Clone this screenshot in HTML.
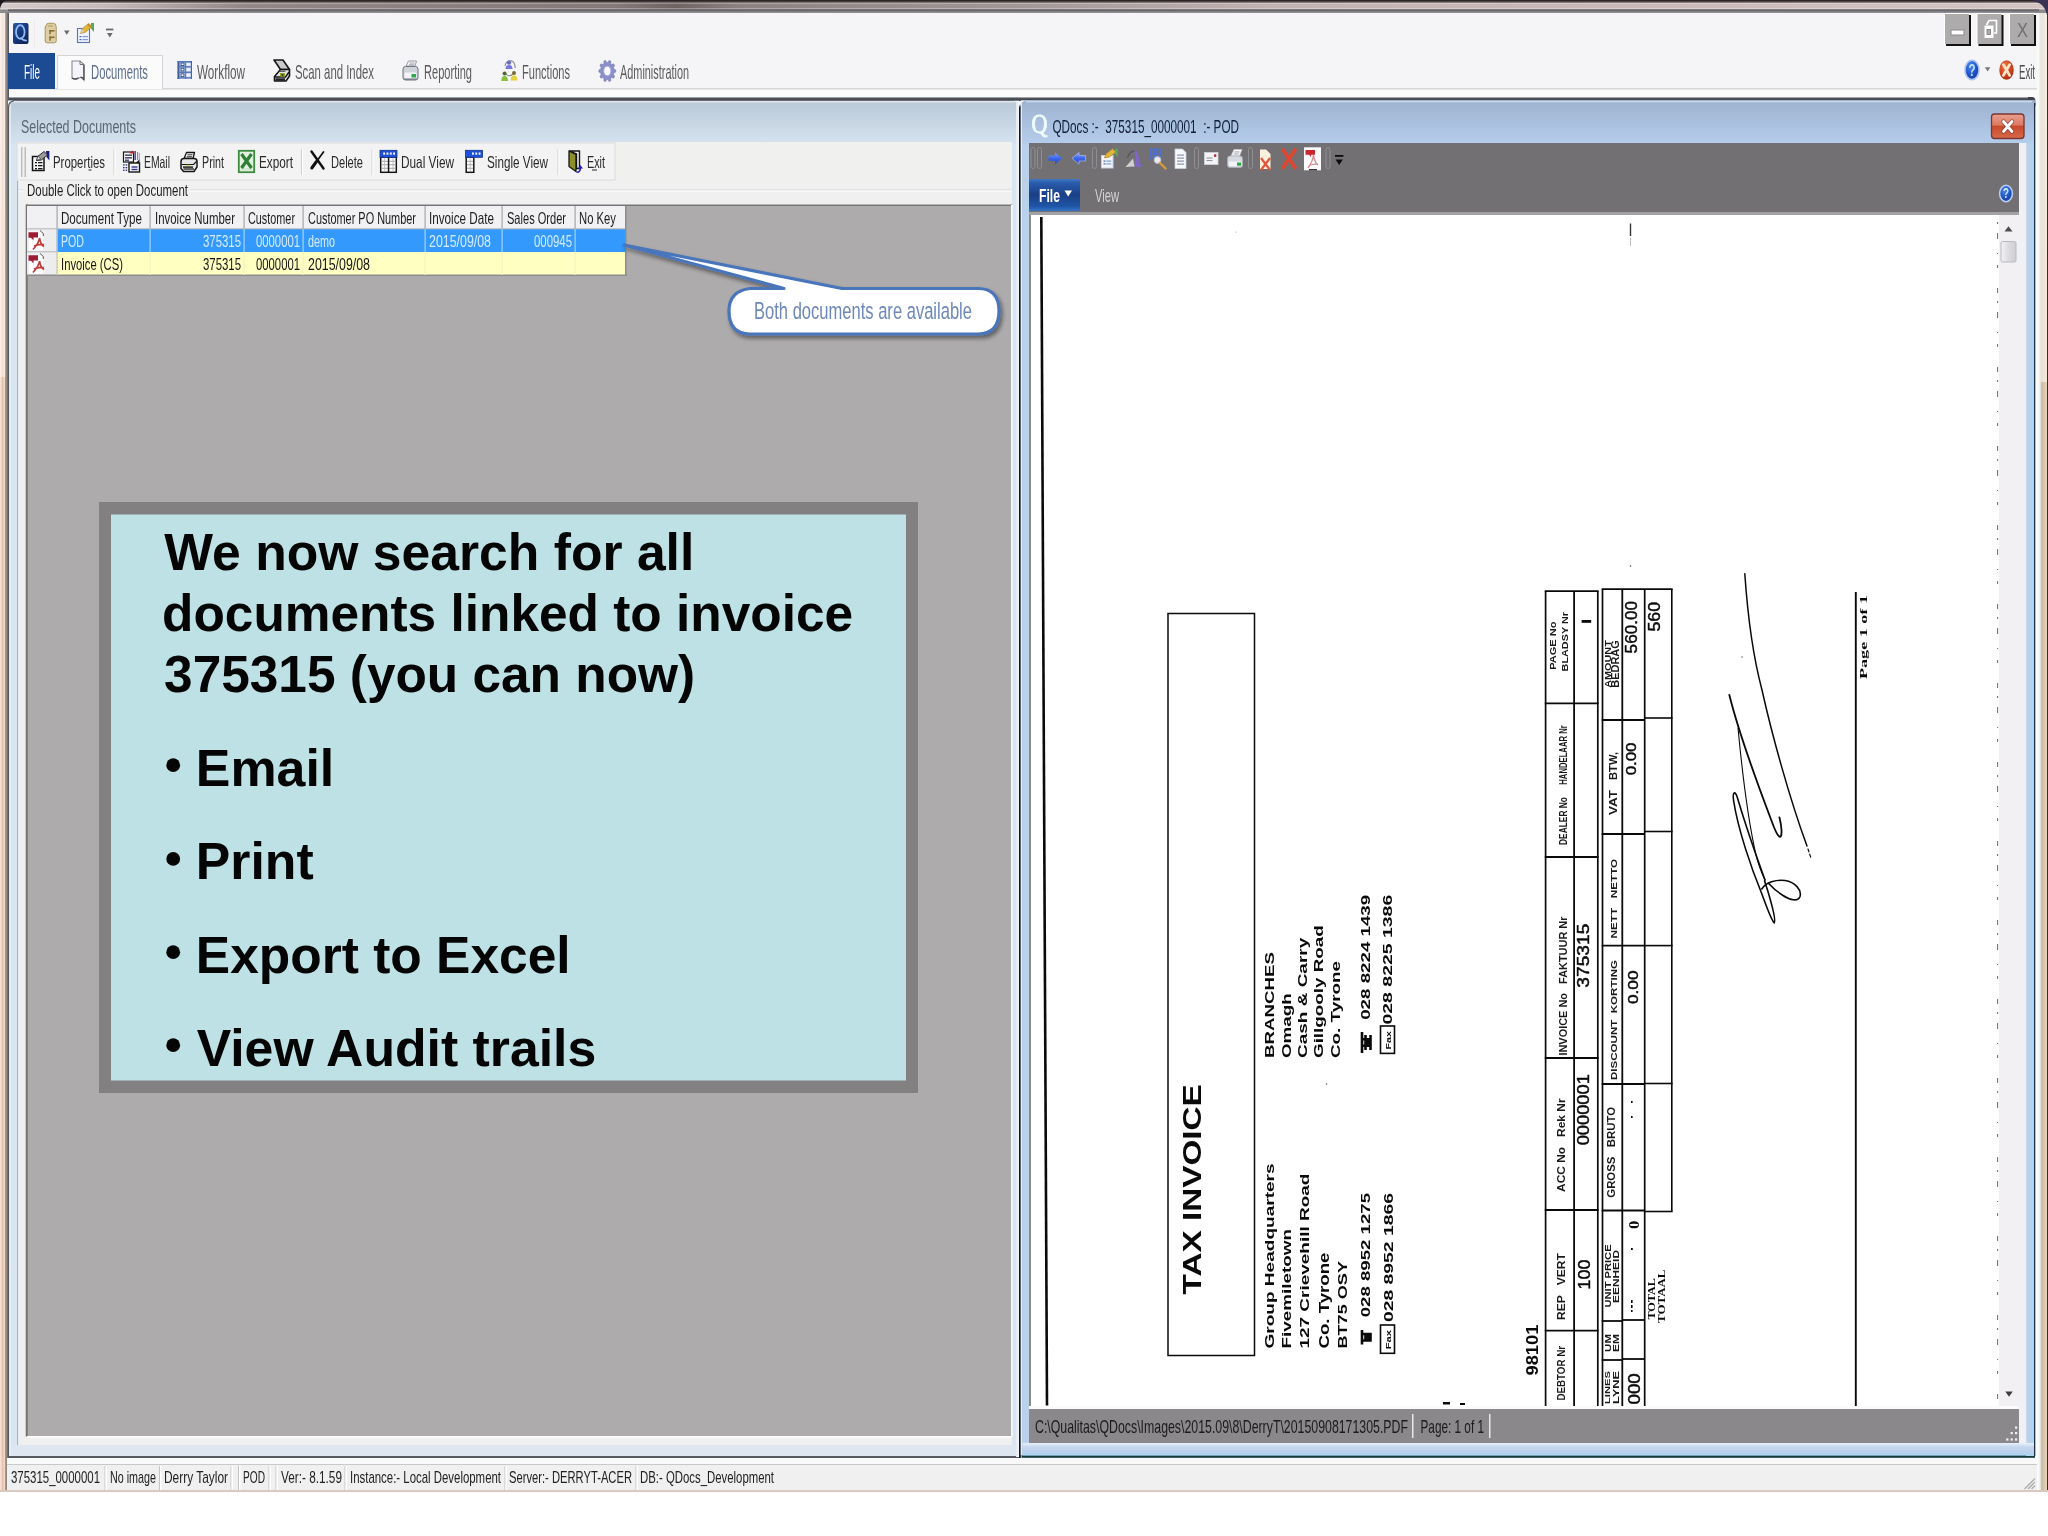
<!DOCTYPE html>
<html><head><meta charset="utf-8"><title>QDocs</title>
<style>html,body{margin:0;padding:0;background:#fff}body{width:2048px;height:1536px}svg{display:block;filter:blur(0.55px)}text{white-space:pre}</style>
</head><body>
<svg width="2048" height="1536" viewBox="0 0 2048 1536" font-family="Liberation Sans, sans-serif">
<defs><linearGradient id="gTop" x1="0" y1="0" x2="0" y2="1"><stop offset="0" stop-color="#2c2224"/><stop offset="0.12" stop-color="#3a3032"/><stop offset="0.2" stop-color="#b8acac"/><stop offset="0.3" stop-color="#8c8282"/><stop offset="0.6" stop-color="#8c8282"/><stop offset="0.68" stop-color="#b4acac"/><stop offset="0.78" stop-color="#55565a"/><stop offset="0.86" stop-color="#88888a"/><stop offset="1" stop-color="#8e8e90"/></linearGradient><linearGradient id="gLeft" x1="0" y1="0" x2="1" y2="0"><stop offset="0" stop-color="#fbe4d6"/><stop offset="0.16" stop-color="#f3d5c5"/><stop offset="0.3" stop-color="#dcbeac"/><stop offset="0.42" stop-color="#f3d3c0"/><stop offset="0.53" stop-color="#fbdcc8"/><stop offset="0.58" stop-color="#a39791"/><stop offset="0.78" stop-color="#85807d"/><stop offset="0.85" stop-color="#58595c"/><stop offset="1" stop-color="#56575a"/></linearGradient><linearGradient id="gRight" x1="0" y1="0" x2="1" y2="0"><stop offset="0" stop-color="#ffffff"/><stop offset="0.28" stop-color="#f6faf6"/><stop offset="0.4" stop-color="#e6e6e6"/><stop offset="0.5" stop-color="#c9bda9"/><stop offset="0.62" stop-color="#d6c0a6"/><stop offset="0.85" stop-color="#e4d0ba"/><stop offset="0.92" stop-color="#e8d8c4"/><stop offset="0.95" stop-color="#3a3022"/><stop offset="1" stop-color="#2a2418"/></linearGradient><linearGradient id="gRBov" x1="0" y1="0" x2="0" y2="1"><stop offset="0" stop-color="#ffffff"/><stop offset="0.72" stop-color="#fff6f0"/><stop offset="1" stop-color="#fff6f0"/></linearGradient><linearGradient id="gTopH" x1="0" y1="0" x2="1" y2="0"><stop offset="0" stop-color="#d6caca"/><stop offset="0.05" stop-color="#c6baba"/><stop offset="0.12" stop-color="#938787"/><stop offset="0.3" stop-color="#857a79"/><stop offset="0.33" stop-color="#6f6462"/><stop offset="0.36" stop-color="#8d8282"/><stop offset="0.5" stop-color="#a39898"/><stop offset="0.62" stop-color="#c2b2b2"/><stop offset="0.8" stop-color="#cbb9b9"/><stop offset="1" stop-color="#d3c3c3"/></linearGradient><linearGradient id="gTopD" x1="0" y1="0" x2="0" y2="1"><stop offset="0" stop-color="#4e4f53"/><stop offset="0.5" stop-color="#77777a"/><stop offset="1" stop-color="#97979a"/></linearGradient><linearGradient id="gLP" x1="0" y1="0" x2="0" y2="1"><stop offset="0" stop-color="#b9c8d6"/><stop offset="1" stop-color="#d6e3f1"/></linearGradient><linearGradient id="gDark" x1="0" y1="0" x2="0" y2="1"><stop offset="0" stop-color="#6c7076"/><stop offset="0.5" stop-color="#3f4349"/><stop offset="1" stop-color="#5c6068"/></linearGradient><linearGradient id="gRW" x1="0" y1="0" x2="0" y2="1"><stop offset="0" stop-color="#9db2cf"/><stop offset="1" stop-color="#b5cdec"/></linearGradient><linearGradient id="gRF" x1="0" y1="0" x2="1" y2="0"><stop offset="0" stop-color="#c4d2e2"/><stop offset="0.6" stop-color="#b4d2ee"/><stop offset="1" stop-color="#a9d7f8"/></linearGradient><linearGradient id="gBF" x1="0" y1="0" x2="0" y2="1"><stop offset="0" stop-color="#e8f1fb"/><stop offset="0.3" stop-color="#c6d8ee"/><stop offset="0.7" stop-color="#bad0ec"/><stop offset="1" stop-color="#a9d6f4"/></linearGradient><filter id="sh" x="-10%" y="-10%" width="130%" height="140%"><feGaussianBlur in="SourceAlpha" stdDeviation="2.2"/><feOffset dx="2" dy="3"/><feComponentTransfer><feFuncA type="linear" slope="0.45"/></feComponentTransfer><feMerge><feMergeNode/><feMergeNode in="SourceGraphic"/></feMerge></filter><linearGradient id="gFile" x1="0" y1="0" x2="0" y2="1"><stop offset="0" stop-color="#3f78c8"/><stop offset="0.12" stop-color="#2a5cad"/><stop offset="0.5" stop-color="#1b3f86"/><stop offset="0.85" stop-color="#1f55a6"/><stop offset="1" stop-color="#3474c8"/></linearGradient><clipPath id="cpDoc"><rect x="1030" y="215" width="969" height="1191"/></clipPath><linearGradient id="gQ" x1="0" y1="0" x2="1" y2="1"><stop offset="0" stop-color="#2a57a6"/><stop offset="0.5" stop-color="#16377a"/><stop offset="1" stop-color="#0b1d4c"/></linearGradient><radialGradient id="gHelp" cx="0.4" cy="0.3" r="0.8"><stop offset="0" stop-color="#4c8af0"/><stop offset="0.6" stop-color="#1d4fc0"/><stop offset="1" stop-color="#123a90"/></radialGradient><radialGradient id="gExit" cx="0.4" cy="0.3" r="0.8"><stop offset="0" stop-color="#f07a48"/><stop offset="0.6" stop-color="#cc3e1c"/><stop offset="1" stop-color="#9a2a10"/></radialGradient><linearGradient id="gArr" x1="0" y1="0" x2="0" y2="1"><stop offset="0" stop-color="#7fa2ff"/><stop offset="0.5" stop-color="#3d66ec"/><stop offset="1" stop-color="#2a46b8"/></linearGradient><linearGradient id="gClose" x1="0" y1="0" x2="0" y2="1"><stop offset="0" stop-color="#e9a08e"/><stop offset="0.45" stop-color="#dc7a62"/><stop offset="0.5" stop-color="#c9492c"/><stop offset="1" stop-color="#d86a4a"/></linearGradient><linearGradient id="gThumb" x1="0" y1="0" x2="1" y2="0"><stop offset="0" stop-color="#f3f3f5"/><stop offset="0.5" stop-color="#dcdcdf"/><stop offset="1" stop-color="#cfcfd3"/></linearGradient></defs>
<rect x="0" y="0" width="2048" height="1536" fill="#ffffff" />
<rect x="0" y="0" width="2048" height="1492" fill="#f4f3f5" />
<rect x="0" y="12" width="9.3" height="1480" fill="url(#gLeft)" />
<rect x="2035.2" y="12" width="12.8" height="1480" fill="url(#gRight)" />
<rect x="2040.6" y="12" width="6.4" height="370" fill="url(#gRBov)" opacity="0.6"/>
<rect x="0" y="12" width="5.2" height="365" fill="url(#gRBov)" opacity="0.55"/>
<rect x="0" y="0" width="2048" height="13" fill="#8b8b8d" />
<rect x="0" y="0" width="2048" height="9.5" fill="url(#gTopH)" />
<rect x="0" y="0" width="2048" height="1.8" fill="#2b2526" />
<rect x="0" y="1.8" width="2048" height="1" fill="#6d6262" />
<rect x="0" y="2.8" width="2048" height="1.2" fill="#ffffff" opacity="0.28"/>
<rect x="0" y="8" width="2048" height="1.3" fill="#ffffff" opacity="0.30"/>
<rect x="8" y="9.5" width="2031" height="3.2" fill="url(#gTopD)" />
<path d="M0 0 H7 C3 1.5 1 4 0 9Z" fill="#1c1a1c"/>
<path d="M2034 0 H2048 V22 C2047 9 2043 3 2034 1.5Z" fill="#3b3152"/>
<rect x="9" y="13" width="2028" height="84" fill="#f5f4f6" />
<rect x="9" y="88" width="2028" height="1.5" fill="#d9d6d8" />
<rect x="9" y="90" width="2028" height="7" fill="#fbfbfb" />
<rect x="8" y="53" width="47" height="36" fill="#1c4a93" />
<text x="24" y="78.8" font-family="Liberation Sans" font-size="19.62" font-weight="normal" fill="#ffffff" text-anchor="start" textLength="16" lengthAdjust="spacingAndGlyphs" >File</text>
<path d="M57.5 89 V55.5 H162.5 V89" fill="#fbfbfb" stroke="#d4d2d6" stroke-width="1"/>
<text x="91" y="78.8" font-family="Liberation Sans" font-size="19.62" font-weight="normal" fill="#5d6f8e" text-anchor="start" textLength="57" lengthAdjust="spacingAndGlyphs" >Documents</text>
<text x="197" y="78.8" font-family="Liberation Sans" font-size="19.62" font-weight="normal" fill="#5a5a5e" text-anchor="start" textLength="48" lengthAdjust="spacingAndGlyphs" >Workflow</text>
<text x="295" y="78.8" font-family="Liberation Sans" font-size="19.62" font-weight="normal" fill="#5a5a5e" text-anchor="start" textLength="79" lengthAdjust="spacingAndGlyphs" >Scan and Index</text>
<text x="424" y="78.8" font-family="Liberation Sans" font-size="19.62" font-weight="normal" fill="#5a5a5e" text-anchor="start" textLength="48" lengthAdjust="spacingAndGlyphs" >Reporting</text>
<text x="522" y="78.8" font-family="Liberation Sans" font-size="19.62" font-weight="normal" fill="#5a5a5e" text-anchor="start" textLength="48" lengthAdjust="spacingAndGlyphs" >Functions</text>
<text x="620" y="78.8" font-family="Liberation Sans" font-size="19.62" font-weight="normal" fill="#5a5a5e" text-anchor="start" textLength="69" lengthAdjust="spacingAndGlyphs" >Administration</text>
<text x="2019" y="78.8" font-family="Liberation Sans" font-size="19.62" font-weight="normal" fill="#4a4a4a" text-anchor="start" textLength="16" lengthAdjust="spacingAndGlyphs" >Exit</text>
<rect x="1944" y="13" width="26" height="32" fill="#ffffff" />
<rect x="1946" y="15" width="25" height="31" fill="#111111" />
<rect x="1945" y="14" width="24" height="30" fill="#adabab" />
<rect x="1976.5" y="13" width="26" height="32" fill="#ffffff" />
<rect x="1978.5" y="15" width="25" height="31" fill="#111111" />
<rect x="1977.5" y="14" width="24" height="30" fill="#adabab" />
<rect x="2009" y="13" width="26" height="32" fill="#ffffff" />
<rect x="2011" y="15" width="25" height="31" fill="#111111" />
<rect x="2010" y="14" width="24" height="30" fill="#adabab" />
<rect x="1951" y="30" width="13" height="5" fill="#ffffff" stroke="#8c8c8c" stroke-width="1"/>
<path d="M1986.5 25 L1989 20.5 H1996.5 V33 H1994" fill="none" stroke="#ffffff" stroke-width="1.6"/>
<rect x="1984.5" y="25.5" width="9" height="12.5" fill="#ffffff" />
<rect x="1987" y="29.5" width="3.5" height="5" fill="#adabab" stroke="#777" stroke-width="0.8"/>
<text x="2017" y="37" font-family="Liberation Sans" font-size="20.35" font-weight="normal" fill="#707070" text-anchor="start" textLength="11" lengthAdjust="spacingAndGlyphs" >X</text>
<rect x="9" y="97" width="1011" height="1361" fill="#d9e6f2" />
<rect x="9" y="100" width="1010" height="45" fill="url(#gLP)" />
<rect x="9" y="97.4" width="2023" height="3.5" fill="url(#gDark)" />
<path d="M2028 97 H2032 Q2035.4 97 2035.4 101 V106 H2034 V101.5 Q2034 100.6 2031 100.6 H2028Z" fill="#3f4349"/>
<text x="21" y="133" font-family="Liberation Sans" font-size="18.17" font-weight="normal" fill="#5a6472" text-anchor="start" textLength="115" lengthAdjust="spacingAndGlyphs" >Selected Documents</text>
<rect x="17" y="142" width="995" height="39" fill="#f0f1ee" />
<rect x="17" y="143" width="598" height="37" fill="#f3f3f3" stroke="#dcdcdc" stroke-width="1"/>
<rect x="17" y="181" width="995" height="1264" fill="#f0f0f0" />
<rect x="27" y="205" width="984" height="1231" fill="#adabac" />
<rect x="26" y="204.5" width="986" height="1.5" fill="#77777a" />
<rect x="25.7" y="204.5" width="2.1" height="1232" fill="#767576" />
<rect x="27" y="1436" width="985" height="2" fill="#fbfbfb" />
<rect x="1011" y="205" width="1.5" height="1233" fill="#fbfbfb" />
<rect x="9" y="1445" width="1010" height="11" fill="#dde6f1" />
<rect x="9" y="1456" width="1011" height="2" fill="#565a60" />
<rect x="1016" y="101" width="3.2" height="1356" fill="#e4edf6" />
<rect x="1017.8" y="101" width="1.2" height="1356" fill="#f2f6fb" />
<rect x="1019" y="100" width="1.8" height="1358" fill="#141619" />
<rect x="1021.5" y="100" width="1013" height="1356" fill="#b9d1ea" />
<rect x="1021.5" y="100" width="1013" height="44" fill="url(#gRW)" />
<rect x="1021.5" y="1455.3" width="1013.5" height="2.5" fill="#143c3e" />
<rect x="2026" y="143" width="8.2" height="1313" fill="url(#gRF)" />
<rect x="2034" y="103" width="1.3" height="1353" fill="#1e3048" />
<rect x="1029" y="143" width="990" height="70" fill="#727072" />
<rect x="1029" y="212" width="990" height="3" fill="#a2a2a4" />
<rect x="2019" y="143" width="7.2" height="1300" fill="#f0f1f7" />
<rect x="1030" y="215" width="969" height="1192" fill="#ffffff" />
<rect x="1029" y="215" width="2" height="1192" fill="#8a8a8c" />
<rect x="1998.9" y="215" width="20.3" height="1192" fill="#f2f0f3" />
<rect x="1029" y="1406" width="990" height="3" fill="#fbfbfb" />
<rect x="1029" y="1409" width="990" height="34" fill="#8a888a" />
<rect x="1022.5" y="1443" width="1011.5" height="12.5" fill="url(#gBF)" />
<rect x="7" y="1458" width="2030" height="6" fill="#f9f9f9" />
<rect x="7" y="1464" width="2030" height="1" fill="#c9c9c9" />
<rect x="7" y="1465" width="2030" height="26" fill="#f0f0f0" />
<rect x="0" y="1490" width="2048" height="2" fill="#d9c9c0" />
<text x="53" y="167.5" font-family="Liberation Sans" font-size="16.28" font-weight="normal" fill="#2a2a2a" text-anchor="start" textLength="52" lengthAdjust="spacingAndGlyphs" >Properties</text>
<text x="144" y="167.5" font-family="Liberation Sans" font-size="16.28" font-weight="normal" fill="#2a2a2a" text-anchor="start" textLength="26" lengthAdjust="spacingAndGlyphs" >EMail</text>
<text x="202" y="167.5" font-family="Liberation Sans" font-size="16.28" font-weight="normal" fill="#2a2a2a" text-anchor="start" textLength="22" lengthAdjust="spacingAndGlyphs" >Print</text>
<text x="259" y="167.5" font-family="Liberation Sans" font-size="16.28" font-weight="normal" fill="#2a2a2a" text-anchor="start" textLength="34" lengthAdjust="spacingAndGlyphs" >Export</text>
<text x="331" y="167.5" font-family="Liberation Sans" font-size="16.28" font-weight="normal" fill="#2a2a2a" text-anchor="start" textLength="32" lengthAdjust="spacingAndGlyphs" >Delete</text>
<text x="401" y="167.5" font-family="Liberation Sans" font-size="16.28" font-weight="normal" fill="#2a2a2a" text-anchor="start" textLength="53" lengthAdjust="spacingAndGlyphs" >Dual View</text>
<text x="487" y="167.5" font-family="Liberation Sans" font-size="16.28" font-weight="normal" fill="#2a2a2a" text-anchor="start" textLength="61" lengthAdjust="spacingAndGlyphs" >Single View</text>
<text x="587" y="167.5" font-family="Liberation Sans" font-size="16.28" font-weight="normal" fill="#2a2a2a" text-anchor="start" textLength="18" lengthAdjust="spacingAndGlyphs" >Exit</text>
<rect x="88.5" y="169.5" width="3" height="1" fill="#2a2a2a" />
<rect x="592" y="169.5" width="5" height="1" fill="#2a2a2a" />
<rect x="113.5" y="149" width="1" height="26" fill="#cfcfcf" />
<rect x="114.5" y="149" width="1" height="26" fill="#ffffff" />
<rect x="301.0" y="149" width="1" height="26" fill="#cfcfcf" />
<rect x="302.0" y="149" width="1" height="26" fill="#ffffff" />
<rect x="371.5" y="149" width="1" height="26" fill="#cfcfcf" />
<rect x="372.5" y="149" width="1" height="26" fill="#ffffff" />
<rect x="557.5" y="149" width="1" height="26" fill="#cfcfcf" />
<rect x="558.5" y="149" width="1" height="26" fill="#ffffff" />
<rect x="21" y="147" width="1.5" height="30" fill="#bdbdbd" />
<rect x="24.5" y="147" width="1.5" height="30" fill="#bdbdbd" />
<rect x="18" y="189.5" width="6" height="1" fill="#d5d5d5" />
<rect x="190" y="189.5" width="822" height="1" fill="#d5d5d5" />
<rect x="18" y="190.5" width="6" height="1" fill="#ffffff" />
<rect x="190" y="190.5" width="822" height="1" fill="#ffffff" />
<rect x="17" y="181" width="1.1" height="1264" fill="#aab2ba" />
<text x="27" y="196" font-family="Liberation Sans" font-size="17.15" font-weight="normal" fill="#1e1e1e" text-anchor="start" textLength="161" lengthAdjust="spacingAndGlyphs" >Double Click to open Document</text>
<rect x="27" y="206" width="598" height="23" fill="#f1f1f4" />
<rect x="27" y="229" width="30" height="46" fill="#ededf0" />
<rect x="57" y="229" width="568" height="23" fill="#3399fd" />
<rect x="57" y="252" width="568" height="23" fill="#ffffc2" />
<rect x="27" y="274.5" width="600" height="1.5" fill="#8d8d8d" />
<rect x="625" y="206" width="1.5" height="70" fill="#8d8d8d" />
<rect x="56.5" y="206" width="1.2" height="23" fill="#a5a5a8" />
<rect x="56.5" y="229" width="1.2" height="23" fill="#9fd4ff" />
<rect x="56.5" y="252" width="1.2" height="23" fill="#f3f3c0" />
<rect x="149.5" y="206" width="1.2" height="23" fill="#a5a5a8" />
<rect x="149.5" y="229" width="1.2" height="23" fill="#9fd4ff" />
<rect x="149.5" y="252" width="1.2" height="23" fill="#f3f3c0" />
<rect x="243.5" y="206" width="1.2" height="23" fill="#a5a5a8" />
<rect x="243.5" y="229" width="1.2" height="23" fill="#9fd4ff" />
<rect x="243.5" y="252" width="1.2" height="23" fill="#f3f3c0" />
<rect x="302.5" y="206" width="1.2" height="23" fill="#a5a5a8" />
<rect x="302.5" y="229" width="1.2" height="23" fill="#9fd4ff" />
<rect x="302.5" y="252" width="1.2" height="23" fill="#f3f3c0" />
<rect x="424.5" y="206" width="1.2" height="23" fill="#a5a5a8" />
<rect x="424.5" y="229" width="1.2" height="23" fill="#9fd4ff" />
<rect x="424.5" y="252" width="1.2" height="23" fill="#f3f3c0" />
<rect x="501.5" y="206" width="1.2" height="23" fill="#a5a5a8" />
<rect x="501.5" y="229" width="1.2" height="23" fill="#9fd4ff" />
<rect x="501.5" y="252" width="1.2" height="23" fill="#f3f3c0" />
<rect x="574.5" y="206" width="1.2" height="23" fill="#a5a5a8" />
<rect x="574.5" y="229" width="1.2" height="23" fill="#9fd4ff" />
<rect x="574.5" y="252" width="1.2" height="23" fill="#f3f3c0" />
<rect x="27" y="228.3" width="598" height="1" fill="#b5b5b8" />
<rect x="27" y="251.3" width="30" height="1" fill="#b5b5b8" />
<rect x="56.5" y="229" width="1" height="46" fill="#b5b5b8" />
<text x="61" y="223.5" font-family="Liberation Sans" font-size="16.28" font-weight="normal" fill="#1c1c1c" text-anchor="start" textLength="81" lengthAdjust="spacingAndGlyphs" >Document Type</text>
<text x="155" y="223.5" font-family="Liberation Sans" font-size="16.28" font-weight="normal" fill="#1c1c1c" text-anchor="start" textLength="80" lengthAdjust="spacingAndGlyphs" >Invoice Number</text>
<text x="248" y="223.5" font-family="Liberation Sans" font-size="16.28" font-weight="normal" fill="#1c1c1c" text-anchor="start" textLength="47" lengthAdjust="spacingAndGlyphs" >Customer</text>
<text x="308" y="223.5" font-family="Liberation Sans" font-size="16.28" font-weight="normal" fill="#1c1c1c" text-anchor="start" textLength="108" lengthAdjust="spacingAndGlyphs" >Customer PO Number</text>
<text x="429" y="223.5" font-family="Liberation Sans" font-size="16.28" font-weight="normal" fill="#1c1c1c" text-anchor="start" textLength="65" lengthAdjust="spacingAndGlyphs" >Invoice Date</text>
<text x="507" y="223.5" font-family="Liberation Sans" font-size="16.28" font-weight="normal" fill="#1c1c1c" text-anchor="start" textLength="59" lengthAdjust="spacingAndGlyphs" >Sales Order</text>
<text x="579" y="223.5" font-family="Liberation Sans" font-size="16.28" font-weight="normal" fill="#1c1c1c" text-anchor="start" textLength="37" lengthAdjust="spacingAndGlyphs" >No Key</text>
<text x="61" y="246.5" font-family="Liberation Sans" font-size="16.28" font-weight="normal" fill="#d4ecff" text-anchor="start" textLength="23" lengthAdjust="spacingAndGlyphs" >POD</text>
<text x="203" y="246.5" font-family="Liberation Sans" font-size="16.28" font-weight="normal" fill="#d4ecff" text-anchor="start" textLength="38" lengthAdjust="spacingAndGlyphs" >375315</text>
<text x="256" y="246.5" font-family="Liberation Sans" font-size="16.28" font-weight="normal" fill="#d4ecff" text-anchor="start" textLength="44" lengthAdjust="spacingAndGlyphs" >0000001</text>
<text x="308" y="246.5" font-family="Liberation Sans" font-size="16.28" font-weight="normal" fill="#d4ecff" text-anchor="start" textLength="27" lengthAdjust="spacingAndGlyphs" >demo</text>
<text x="429" y="246.5" font-family="Liberation Sans" font-size="16.28" font-weight="normal" fill="#d4ecff" text-anchor="start" textLength="62" lengthAdjust="spacingAndGlyphs" >2015/09/08</text>
<text x="534" y="246.5" font-family="Liberation Sans" font-size="16.28" font-weight="normal" fill="#d4ecff" text-anchor="start" textLength="38" lengthAdjust="spacingAndGlyphs" >000945</text>
<text x="61" y="269.5" font-family="Liberation Sans" font-size="16.28" font-weight="normal" fill="#151515" text-anchor="start" textLength="62" lengthAdjust="spacingAndGlyphs" >Invoice (CS)</text>
<text x="203" y="269.5" font-family="Liberation Sans" font-size="16.28" font-weight="normal" fill="#151515" text-anchor="start" textLength="38" lengthAdjust="spacingAndGlyphs" >375315</text>
<text x="256" y="269.5" font-family="Liberation Sans" font-size="16.28" font-weight="normal" fill="#151515" text-anchor="start" textLength="44" lengthAdjust="spacingAndGlyphs" >0000001</text>
<text x="308" y="269.5" font-family="Liberation Sans" font-size="16.28" font-weight="normal" fill="#151515" text-anchor="start" textLength="62" lengthAdjust="spacingAndGlyphs" >2015/09/08</text>
<rect x="99" y="502" width="819" height="591" fill="#838082" />
<rect x="111" y="514.5" width="795" height="566" fill="#bde1e4" />
<text x="164.3" y="569.6" font-family="Liberation Sans" font-size="51.2" font-weight="bold" fill="#050505" text-anchor="start" textLength="530" lengthAdjust="spacingAndGlyphs" >We now search for all</text>
<text x="162.1" y="630.7" font-family="Liberation Sans" font-size="51.2" font-weight="bold" fill="#050505" text-anchor="start" textLength="691" lengthAdjust="spacingAndGlyphs" >documents linked to invoice</text>
<text x="164.1" y="691.6" font-family="Liberation Sans" font-size="51.2" font-weight="bold" fill="#050505" text-anchor="start" textLength="531" lengthAdjust="spacingAndGlyphs" >375315 (you can now)</text>
<circle cx="173.2" cy="765.2" r="6.9" fill="#050505"/>
<text x="195.8" y="785.5" font-family="Liberation Sans" font-size="51.2" font-weight="bold" fill="#050505" text-anchor="start" textLength="138.5" lengthAdjust="spacingAndGlyphs" >Email</text>
<circle cx="173.2" cy="858.9000000000001" r="6.9" fill="#050505"/>
<text x="195.8" y="879.2" font-family="Liberation Sans" font-size="51.2" font-weight="bold" fill="#050505" text-anchor="start" textLength="117.9" lengthAdjust="spacingAndGlyphs" >Print</text>
<circle cx="173.2" cy="952.2" r="6.9" fill="#050505"/>
<text x="195.8" y="972.5" font-family="Liberation Sans" font-size="51.2" font-weight="bold" fill="#050505" text-anchor="start" textLength="374.8" lengthAdjust="spacingAndGlyphs" >Export to Excel</text>
<circle cx="173.2" cy="1045.2" r="6.9" fill="#050505"/>
<text x="196.7" y="1065.5" font-family="Liberation Sans" font-size="51.2" font-weight="bold" fill="#050505" text-anchor="start" textLength="399.5" lengthAdjust="spacingAndGlyphs" >View Audit trails</text>
<path d="M624 245 L842 288.5 H978 Q999 288.5 999 311 Q999 334 978 334 H750 Q729 334 729 311 Q729 291 750 288.5 H784 Z" fill="#ffffff" stroke="#4a74ba" stroke-width="3.2" stroke-linejoin="round" filter="url(#sh)"/>
<text x="754" y="318.6" font-family="Liberation Sans" font-size="23.84" font-weight="normal" fill="#6c88ba" text-anchor="start" textLength="218" lengthAdjust="spacingAndGlyphs" >Both documents are available</text>
<text x="11" y="1482.5" font-family="Liberation Sans" font-size="16.57" font-weight="normal" fill="#222" text-anchor="start" textLength="89" lengthAdjust="spacingAndGlyphs" >375315_0000001</text>
<text x="110" y="1482.5" font-family="Liberation Sans" font-size="16.57" font-weight="normal" fill="#222" text-anchor="start" textLength="46" lengthAdjust="spacingAndGlyphs" >No image</text>
<text x="164" y="1482.5" font-family="Liberation Sans" font-size="16.57" font-weight="normal" fill="#222" text-anchor="start" textLength="64" lengthAdjust="spacingAndGlyphs" >Derry Taylor</text>
<text x="243" y="1482.5" font-family="Liberation Sans" font-size="16.57" font-weight="normal" fill="#222" text-anchor="start" textLength="22" lengthAdjust="spacingAndGlyphs" >POD</text>
<text x="281" y="1482.5" font-family="Liberation Sans" font-size="16.57" font-weight="normal" fill="#222" text-anchor="start" textLength="61" lengthAdjust="spacingAndGlyphs" >Ver:- 8.1.59</text>
<text x="350" y="1482.5" font-family="Liberation Sans" font-size="16.57" font-weight="normal" fill="#222" text-anchor="start" textLength="151" lengthAdjust="spacingAndGlyphs" >Instance:- Local Development</text>
<text x="509" y="1482.5" font-family="Liberation Sans" font-size="16.57" font-weight="normal" fill="#222" text-anchor="start" textLength="123" lengthAdjust="spacingAndGlyphs" >Server:- DERRYT-ACER</text>
<text x="640" y="1482.5" font-family="Liberation Sans" font-size="16.57" font-weight="normal" fill="#222" text-anchor="start" textLength="134" lengthAdjust="spacingAndGlyphs" >DB:- QDocs_Development</text>
<rect x="104.5" y="1466" width="1" height="24" fill="#c4c4c4" />
<rect x="105.5" y="1466" width="1.5" height="24" fill="#ffffff" />
<rect x="159.0" y="1466" width="1" height="24" fill="#c4c4c4" />
<rect x="160.0" y="1466" width="1.5" height="24" fill="#ffffff" />
<rect x="230.5" y="1466" width="1" height="24" fill="#c4c4c4" />
<rect x="231.5" y="1466" width="1.5" height="24" fill="#ffffff" />
<rect x="238.0" y="1466" width="1" height="24" fill="#c4c4c4" />
<rect x="239.0" y="1466" width="1.5" height="24" fill="#ffffff" />
<rect x="268.5" y="1466" width="1" height="24" fill="#c4c4c4" />
<rect x="269.5" y="1466" width="1.5" height="24" fill="#ffffff" />
<rect x="275.5" y="1466" width="1" height="24" fill="#c4c4c4" />
<rect x="276.5" y="1466" width="1.5" height="24" fill="#ffffff" />
<rect x="344.5" y="1466" width="1" height="24" fill="#c4c4c4" />
<rect x="345.5" y="1466" width="1.5" height="24" fill="#ffffff" />
<rect x="504.5" y="1466" width="1" height="24" fill="#c4c4c4" />
<rect x="505.5" y="1466" width="1.5" height="24" fill="#ffffff" />
<rect x="635.5" y="1466" width="1" height="24" fill="#c4c4c4" />
<rect x="636.5" y="1466" width="1.5" height="24" fill="#ffffff" />
<text x="1052.5" y="132.5" font-family="Liberation Sans" font-size="18.17" font-weight="normal" fill="#10203c" text-anchor="start" textLength="186.5" lengthAdjust="spacingAndGlyphs" >QDocs :-  375315_0000001  :- POD</text>
<text x="1035" y="1433" font-family="Liberation Sans" font-size="18.31" font-weight="normal" fill="#1b1b1b" text-anchor="start" textLength="373" lengthAdjust="spacingAndGlyphs" >C:\Qualitas\QDocs\Images\2015.09\8\DerryT\20150908171305.PDF</text>
<text x="1420.5" y="1433" font-family="Liberation Sans" font-size="18.31" font-weight="normal" fill="#1b1b1b" text-anchor="start" textLength="63.5" lengthAdjust="spacingAndGlyphs" >Page: 1 of 1</text>
<rect x="1412" y="1414" width="1.5" height="24" fill="#e8e8e8" />
<rect x="1489" y="1414" width="1.5" height="24" fill="#e8e8e8" />
<rect x="1029" y="179" width="51" height="32" fill="url(#gFile)" rx="2"/>
<text x="1039" y="201.5" font-family="Liberation Sans" font-size="18.17" font-weight="bold" fill="#ffffff" text-anchor="start" textLength="21" lengthAdjust="spacingAndGlyphs" >File</text>
<path d="M1064.5 190.5 H1072 L1068.2 196.5Z" fill="#ffffff"/>
<text x="1095" y="201.5" font-family="Liberation Sans" font-size="18.17" font-weight="normal" fill="#d2d2d2" text-anchor="start" textLength="24" lengthAdjust="spacingAndGlyphs" >View</text>
<g id="scan" clip-path="url(#cpDoc)">
<line x1="1041.3" y1="217" x2="1047" y2="1405.5" stroke="#0a0a0a" stroke-width="2.6" />
<rect x="1443" y="1402" width="7" height="2.5" fill="#0a0a0a" />
<rect x="1460" y="1403" width="5" height="2" fill="#0a0a0a" />
<rect x="1168" y="613.5" width="86.5" height="742" fill="none" stroke="#0a0a0a" stroke-width="1.5"/>
<text transform="translate(1200.8 1294.4) rotate(-90)" font-family="Liberation Sans" font-size="25.0" font-weight="bold" fill="#0a0a0a" textLength="210.2" lengthAdjust="spacingAndGlyphs" >TAX INVOICE</text>
<text transform="translate(1274.2 1348.6) rotate(-90)" font-family="Liberation Sans" font-size="13.66" font-weight="bold" fill="#0a0a0a" textLength="185.2" lengthAdjust="spacingAndGlyphs" >Group Headquarters</text>
<text transform="translate(1291.4 1348.6) rotate(-90)" font-family="Liberation Sans" font-size="13.66" font-weight="bold" fill="#0a0a0a" textLength="119.6" lengthAdjust="spacingAndGlyphs" >Fivemiletown</text>
<text transform="translate(1309 1348.6) rotate(-90)" font-family="Liberation Sans" font-size="13.08" font-weight="bold" fill="#0a0a0a" textLength="175.0" lengthAdjust="spacingAndGlyphs" >127 Crievehill Road</text>
<text transform="translate(1329 1348.6) rotate(-90)" font-family="Liberation Sans" font-size="13.81" font-weight="bold" fill="#0a0a0a" textLength="96.1" lengthAdjust="spacingAndGlyphs" >Co. Tyrone</text>
<text transform="translate(1347.2 1348.6) rotate(-90)" font-family="Liberation Sans" font-size="13.66" font-weight="bold" fill="#0a0a0a" textLength="87.6" lengthAdjust="spacingAndGlyphs" >BT75 OSY</text>
<text transform="translate(1370.3 1317.3) rotate(-90)" font-family="Liberation Sans" font-size="13.08" font-weight="bold" fill="#0a0a0a" textLength="124.3" lengthAdjust="spacingAndGlyphs" >028 8952 1275</text>
<text transform="translate(1392.5 1322) rotate(-90)" font-family="Liberation Sans" font-size="12.94" font-weight="bold" fill="#0a0a0a" textLength="129" lengthAdjust="spacingAndGlyphs" >028 8952 1866</text>
<text transform="translate(1274.2 1058) rotate(-90)" font-family="Liberation Sans" font-size="13.66" font-weight="bold" fill="#0a0a0a" textLength="106" lengthAdjust="spacingAndGlyphs" >BRANCHES</text>
<text transform="translate(1291 1058) rotate(-90)" font-family="Liberation Sans" font-size="13.08" font-weight="bold" fill="#0a0a0a" textLength="64.7" lengthAdjust="spacingAndGlyphs" >Omagh</text>
<text transform="translate(1307 1058) rotate(-90)" font-family="Liberation Sans" font-size="12.5" font-weight="bold" fill="#0a0a0a" textLength="120.2" lengthAdjust="spacingAndGlyphs" >Cash &amp; Carry</text>
<text transform="translate(1323.4 1058) rotate(-90)" font-family="Liberation Sans" font-size="12.5" font-weight="bold" fill="#0a0a0a" textLength="132.7" lengthAdjust="spacingAndGlyphs" >Gillgooly Road</text>
<text transform="translate(1339.8 1058) rotate(-90)" font-family="Liberation Sans" font-size="12.79" font-weight="bold" fill="#0a0a0a" textLength="97" lengthAdjust="spacingAndGlyphs" >Co. Tyrone</text>
<text transform="translate(1370.3 1019.8) rotate(-90)" font-family="Liberation Sans" font-size="12.5" font-weight="bold" fill="#0a0a0a" textLength="125.0" lengthAdjust="spacingAndGlyphs" >028 8224 1439</text>
<text transform="translate(1392.2 1024.5) rotate(-90)" font-family="Liberation Sans" font-size="12.5" font-weight="bold" fill="#0a0a0a" textLength="129.7" lengthAdjust="spacingAndGlyphs" >028 8225 1386</text>
<path d="M1362 1330 V1344.5 M1365.5 1333 V1341.5 M1362 1334.05 H1371.5 M1362 1340.45 H1371.5 M1370.5 1333 V1341.5" stroke="#0a0a0a" stroke-width="2.6" fill="none"/>
<rect x="1365" y="1334.25" width="5" height="6" fill="#0a0a0a" />
<path d="M1362 1032 V1053 M1365.5 1035 V1050 M1362 1039.3 H1371.5 M1362 1045.7 H1371.5 M1370.5 1035 V1050" stroke="#0a0a0a" stroke-width="2.6" fill="none"/>
<rect x="1365" y="1039.5" width="5" height="6" fill="#0a0a0a" />
<rect x="1380.5" y="1325" width="14" height="28.299999999999955" fill="#fff" stroke="#0a0a0a" stroke-width="1.6"/>
<text transform="translate(1390.5 1349.3) rotate(-90)" font-family="Liberation Sans" font-size="7.99" font-weight="bold" fill="#0a0a0a" textLength="19.3" lengthAdjust="spacingAndGlyphs" >Fax</text>
<rect x="1380.5" y="1026" width="14" height="27.40000000000009" fill="#fff" stroke="#0a0a0a" stroke-width="1.6"/>
<text transform="translate(1390.5 1049.4) rotate(-90)" font-family="Liberation Sans" font-size="7.99" font-weight="bold" fill="#0a0a0a" textLength="18.4" lengthAdjust="spacingAndGlyphs" >Fax</text>
<circle cx="1326.5" cy="1084" r="0.8" fill="#555"/>
<text transform="translate(1538 1375.5) rotate(-90)" font-family="Liberation Sans" font-size="15.7" font-weight="bold" fill="#0a0a0a" textLength="50.9" lengthAdjust="spacingAndGlyphs" >98101</text>
<line x1="1545.6" y1="591" x2="1545.6" y2="1406" stroke="#0a0a0a" stroke-width="1.7" />
<line x1="1574.1" y1="591" x2="1574.1" y2="1406" stroke="#0a0a0a" stroke-width="1.8" />
<line x1="1597.8" y1="591" x2="1597.8" y2="1406" stroke="#0a0a0a" stroke-width="1.7" />
<line x1="1544.8" y1="591.2" x2="1598.6" y2="591.2" stroke="#0a0a0a" stroke-width="1.8" />
<line x1="1544.8" y1="703.4" x2="1598.6" y2="703.4" stroke="#0a0a0a" stroke-width="1.8" />
<line x1="1544.8" y1="857" x2="1598.6" y2="857" stroke="#0a0a0a" stroke-width="1.8" />
<line x1="1544.8" y1="1058" x2="1598.6" y2="1058" stroke="#0a0a0a" stroke-width="1.8" />
<line x1="1544.8" y1="1210" x2="1598.6" y2="1210" stroke="#0a0a0a" stroke-width="1.8" />
<line x1="1544.8" y1="1330.7" x2="1598.6" y2="1330.7" stroke="#0a0a0a" stroke-width="1.8" />
<text transform="translate(1555.8 669.8) rotate(-90)" font-family="Liberation Sans" font-size="9.16" font-weight="bold" fill="#1a1a1a" textLength="48.4" lengthAdjust="spacingAndGlyphs" >PAGE No</text>
<text transform="translate(1567.5 671.4) rotate(-90)" font-family="Liberation Sans" font-size="9.16" font-weight="bold" fill="#1a1a1a" textLength="59.4" lengthAdjust="spacingAndGlyphs" >BLADSY Nr</text>
<text transform="translate(1566.7 845) rotate(-90)" font-family="Liberation Sans" font-size="10.17" font-weight="bold" fill="#1a1a1a" textLength="48" lengthAdjust="spacingAndGlyphs" >DEALER No</text>
<text transform="translate(1566.7 784.7) rotate(-90)" font-family="Liberation Sans" font-size="10.17" font-weight="bold" fill="#1a1a1a" textLength="59.4" lengthAdjust="spacingAndGlyphs" >HANDELAAR Nr</text>
<text transform="translate(1566.5 1055.6) rotate(-90)" font-family="Liberation Sans" font-size="10.32" font-weight="bold" fill="#1a1a1a" textLength="139.1" lengthAdjust="spacingAndGlyphs" >INVOICE No   FAKTUUR Nr</text>
<text transform="translate(1565.3 1192) rotate(-90)" font-family="Liberation Sans" font-size="10.61" font-weight="bold" fill="#1a1a1a" textLength="93.6" lengthAdjust="spacingAndGlyphs" >ACC No   Rek Nr</text>
<text transform="translate(1565.2 1320) rotate(-90)" font-family="Liberation Sans" font-size="10.47" font-weight="bold" fill="#1a1a1a" textLength="67" lengthAdjust="spacingAndGlyphs" >REP   VERT</text>
<text transform="translate(1565.2 1400.6) rotate(-90)" font-family="Liberation Sans" font-size="10.47" font-weight="bold" fill="#1a1a1a" textLength="54.6" lengthAdjust="spacingAndGlyphs" >DEBTOR Nr</text>
<text transform="translate(1589.1 987.7) rotate(-90)" font-family="Liberation Sans" font-size="15.84" font-weight="normal" fill="#0a0a0a" textLength="64.1" lengthAdjust="spacingAndGlyphs"  stroke="#0a0a0a" stroke-width="0.45">375315</text>
<text transform="translate(1588.8 1145.3) rotate(-90)" font-family="Liberation Sans" font-size="15.99" font-weight="normal" fill="#0a0a0a" textLength="71.1" lengthAdjust="spacingAndGlyphs"  stroke="#0a0a0a" stroke-width="0.45">0000001</text>
<text transform="translate(1589.5 1289.5) rotate(-90)" font-family="Liberation Sans" font-size="16.72" font-weight="normal" fill="#0a0a0a" textLength="30.0" lengthAdjust="spacingAndGlyphs"  stroke="#0a0a0a" stroke-width="0.45">100</text>
<rect x="1581.6" y="620" width="9.6" height="2.8" fill="#0a0a0a" />
<line x1="1602.5" y1="589" x2="1602.5" y2="1406" stroke="#0a0a0a" stroke-width="1.7" />
<line x1="1622.3" y1="589" x2="1622.3" y2="1406" stroke="#0a0a0a" stroke-width="1.8" />
<line x1="1644.7" y1="589" x2="1644.7" y2="1406" stroke="#0a0a0a" stroke-width="1.7" />
<line x1="1671.8" y1="589" x2="1671.8" y2="1211.5" stroke="#0a0a0a" stroke-width="1.6" />
<line x1="1601.7" y1="589.2" x2="1672.6" y2="589.2" stroke="#0a0a0a" stroke-width="1.8" />
<line x1="1601.7" y1="720" x2="1644.7" y2="720" stroke="#0a0a0a" stroke-width="1.8" />
<line x1="1601.7" y1="834" x2="1644.7" y2="834" stroke="#0a0a0a" stroke-width="1.8" />
<line x1="1601.7" y1="945.6" x2="1644.7" y2="945.6" stroke="#0a0a0a" stroke-width="1.8" />
<line x1="1601.7" y1="1084" x2="1644.7" y2="1084" stroke="#0a0a0a" stroke-width="1.8" />
<line x1="1601.7" y1="1210.5" x2="1644.7" y2="1210.5" stroke="#0a0a0a" stroke-width="1.8" />
<line x1="1644.7" y1="718" x2="1672.6" y2="718" stroke="#0a0a0a" stroke-width="1.6" />
<line x1="1644.7" y1="831.5" x2="1672.6" y2="831.5" stroke="#0a0a0a" stroke-width="1.6" />
<line x1="1644.7" y1="945.6" x2="1672.6" y2="945.6" stroke="#0a0a0a" stroke-width="1.6" />
<line x1="1644.7" y1="1083.5" x2="1672.6" y2="1083.5" stroke="#0a0a0a" stroke-width="1.6" />
<line x1="1644.7" y1="1211.5" x2="1672.6" y2="1211.5" stroke="#0a0a0a" stroke-width="1.6" />
<line x1="1601.7" y1="1321" x2="1622.3" y2="1321" stroke="#0a0a0a" stroke-width="1.8" />
<line x1="1622.3" y1="1320" x2="1644.7" y2="1320" stroke="#0a0a0a" stroke-width="1.8" />
<line x1="1601.7" y1="1360" x2="1622.3" y2="1360" stroke="#0a0a0a" stroke-width="1.8" />
<line x1="1622.3" y1="1359" x2="1644.7" y2="1359" stroke="#0a0a0a" stroke-width="1.8" />
<text transform="translate(1610.5 687.8) rotate(-90)" font-family="Liberation Sans" font-size="9.16" font-weight="bold" fill="#1a1a1a" textLength="47.6" lengthAdjust="spacingAndGlyphs" >AMOUNT</text>
<text transform="translate(1619 687.8) rotate(-90)" font-family="Liberation Sans" font-size="10.17" font-weight="bold" fill="#1a1a1a" textLength="47.6" lengthAdjust="spacingAndGlyphs" >BEDRAG</text>
<text transform="translate(1616.7 815) rotate(-90)" font-family="Liberation Sans" font-size="10.17" font-weight="bold" fill="#1a1a1a" textLength="25" lengthAdjust="spacingAndGlyphs" >VAT</text>
<text transform="translate(1616.7 780) rotate(-90)" font-family="Liberation Sans" font-size="10.17" font-weight="bold" fill="#1a1a1a" textLength="28" lengthAdjust="spacingAndGlyphs" >BTW,</text>
<text transform="translate(1617 938.4) rotate(-90)" font-family="Liberation Sans" font-size="8.72" font-weight="bold" fill="#1a1a1a" textLength="79.6" lengthAdjust="spacingAndGlyphs" >NETT   NETTO</text>
<text transform="translate(1617 1080) rotate(-90)" font-family="Liberation Sans" font-size="8.72" font-weight="bold" fill="#1a1a1a" textLength="120" lengthAdjust="spacingAndGlyphs" >DISCOUNT  KORTING</text>
<text transform="translate(1615.3 1197.7) rotate(-90)" font-family="Liberation Sans" font-size="10.17" font-weight="bold" fill="#1a1a1a" textLength="90.7" lengthAdjust="spacingAndGlyphs" >GROSS   BRUTO</text>
<text transform="translate(1610.5 1307.5) rotate(-90)" font-family="Liberation Sans" font-size="8.87" font-weight="bold" fill="#1a1a1a" textLength="63.1" lengthAdjust="spacingAndGlyphs" >UNIT PRICE</text>
<text transform="translate(1618.6 1303) rotate(-90)" font-family="Liberation Sans" font-size="8.72" font-weight="bold" fill="#1a1a1a" textLength="53" lengthAdjust="spacingAndGlyphs" >EENHEID</text>
<text transform="translate(1610.5 1351.9) rotate(-90)" font-family="Liberation Sans" font-size="8.72" font-weight="bold" fill="#1a1a1a" textLength="17.9" lengthAdjust="spacingAndGlyphs" >UM</text>
<text transform="translate(1618.5 1351.9) rotate(-90)" font-family="Liberation Sans" font-size="8.72" font-weight="bold" fill="#1a1a1a" textLength="17.9" lengthAdjust="spacingAndGlyphs" >EM</text>
<text transform="translate(1610 1404) rotate(-90)" font-family="Liberation Sans" font-size="7.99" font-weight="bold" fill="#1a1a1a" textLength="33" lengthAdjust="spacingAndGlyphs" >LINES</text>
<text transform="translate(1618.5 1404) rotate(-90)" font-family="Liberation Sans" font-size="8.72" font-weight="bold" fill="#1a1a1a" textLength="33" lengthAdjust="spacingAndGlyphs" >LYNE</text>
<text transform="translate(1637 653.4) rotate(-90)" font-family="Liberation Sans" font-size="17.01" font-weight="normal" fill="#0a0a0a" textLength="52.4" lengthAdjust="spacingAndGlyphs"  stroke="#0a0a0a" stroke-width="0.45">560.00</text>
<text transform="translate(1659.7 631.6) rotate(-90)" font-family="Liberation Sans" font-size="15.84" font-weight="normal" fill="#0a0a0a" textLength="29.7" lengthAdjust="spacingAndGlyphs"  stroke="#0a0a0a" stroke-width="0.45">560</text>
<text transform="translate(1636.3 775.3) rotate(-90)" font-family="Liberation Sans" font-size="14.97" font-weight="normal" fill="#0a0a0a" textLength="32.8" lengthAdjust="spacingAndGlyphs"  stroke="#0a0a0a" stroke-width="0.45">0.00</text>
<text transform="translate(1637.6 1004) rotate(-90)" font-family="Liberation Sans" font-size="14.83" font-weight="normal" fill="#0a0a0a" textLength="33.5" lengthAdjust="spacingAndGlyphs"  stroke="#0a0a0a" stroke-width="0.45">0.00</text>
<text transform="translate(1639.4 1229) rotate(-90)" font-family="Liberation Serif" font-size="14.96" font-weight="bold" fill="#0a0a0a" textLength="8.4" lengthAdjust="spacingAndGlyphs" >0</text>
<text transform="translate(1639.7 1420) rotate(-90)" font-family="Liberation Sans" font-size="16.72" font-weight="normal" fill="#0a0a0a" textLength="46.6" lengthAdjust="spacingAndGlyphs"  stroke="#0a0a0a" stroke-width="0.45">0.000</text>
<rect x="1631" y="1300" width="1.6" height="3" fill="#0a0a0a" />
<rect x="1631" y="1305" width="1.6" height="3" fill="#0a0a0a" />
<rect x="1631" y="1310" width="1.6" height="2" fill="#0a0a0a" />
<rect x="1631" y="1248" width="1.8" height="2" fill="#0a0a0a" />
<rect x="1631" y="1101" width="1.6" height="2" fill="#0a0a0a" />
<rect x="1631" y="1116" width="1.6" height="2" fill="#0a0a0a" />
<text transform="translate(1654.7 1319.6) rotate(-90)" font-family="Liberation Serif" font-size="10.84" font-weight="bold" fill="#0a0a0a" textLength="41.6" lengthAdjust="spacingAndGlyphs" >TOTAL</text>
<text transform="translate(1664.8 1323) rotate(-90)" font-family="Liberation Serif" font-size="10.99" font-weight="bold" fill="#0a0a0a" textLength="53.5" lengthAdjust="spacingAndGlyphs" >TOTAAL</text>
<path d="M1744.8 573.8 C1748 620 1754 660 1762 690 C1772 735 1790 800 1807 846" fill="none" stroke="#0a0a0a" stroke-linecap="round" stroke-width="1.5"/>
<path d="M1808 849 L1811.3 859" fill="none" stroke="#0a0a0a" stroke-linecap="round" stroke-width="1.2" stroke-dasharray="3 2.5"/>
<path d="M1729.3 694.8 C1738 730 1756 780 1772 822 C1777 836 1782 843 1781.5 830 C1781.2 824 1780 820 1779.4 817.3" fill="none" stroke="#0a0a0a" stroke-linecap="round" stroke-width="1.8"/>
<path d="M1738 728 C1742 770 1748 820 1756 855 C1759 867 1762 874 1765 880" fill="none" stroke="#0a0a0a" stroke-linecap="round" stroke-width="1.1"/>
<path d="M1765 880 C1757 858 1744 820 1737.5 798 C1735 790 1732.5 792 1733.5 800 C1738 830 1752 870 1761.5 893 C1766 905 1771 920 1774.2 922.8 C1776 921 1772 905 1767.5 890 C1765 882 1764 880 1765 880" fill="none" stroke="#0a0a0a" stroke-linecap="round" stroke-width="1.6"/>
<path d="M1761.8 889 C1766 882 1776 879.5 1785 880.5 C1795 882 1802 890 1800 896.5 C1798 902 1790 900 1783 895.5 C1776 891 1771 886 1769 883.7" fill="none" stroke="#0a0a0a" stroke-linecap="round" stroke-width="1.6"/>
<circle cx="1742" cy="657" r="0.8" fill="#666"/>
<line x1="1855.8" y1="592" x2="1855.8" y2="1406" stroke="#0a0a0a" stroke-width="1.9" />
<text transform="translate(1867 679) rotate(-90)" font-family="Liberation Serif" font-size="10.99" font-weight="bold" fill="#0a0a0a" textLength="84" lengthAdjust="spacingAndGlyphs" >Page 1 of 1</text>
<line x1="1630.5" y1="223.5" x2="1630.5" y2="236" stroke="#333" stroke-width="1.4" />
<line x1="1630.5" y1="238" x2="1630.5" y2="246" stroke="#aaa" stroke-width="0.8" />
<circle cx="1630.5" cy="566" r="0.8" fill="#444"/>
<circle cx="1236" cy="232" r="0.6" fill="#999"/>
<line x1="1997.6" y1="222" x2="1997.6" y2="1400" stroke="#5a5a5a" stroke-width="0.9" stroke-dasharray="2 9 6 14 1 11 3 20 5 8"/>
</g>
<rect x="13" y="23" width="15.5" height="21" fill="url(#gQ)" rx="2"/>
<ellipse cx="20.3" cy="32" rx="4.3" ry="6.8" fill="none" stroke="#8fbdf2" stroke-width="1.8"/>
<path d="M20.5 37.5 Q23 41 27 40.5" fill="none" stroke="#8fbdf2" stroke-width="1.6"/>
<rect x="34" y="20" width="1" height="28" fill="#ebebed" />
<path d="M46.5 25 Q46.5 23.3 48.5 23.3 H53.5 Q56.2 23.3 56.2 27 V41 Q56.2 42.8 54.3 42.8 H47 Q45.2 42.8 45.2 41 V27 Z" fill="#dccfa6" stroke="#a8935f" stroke-width="1"/>
<rect x="49.3" y="30" width="5.2" height="1.6" fill="#8b6c30" />
<rect x="49.3" y="30" width="1.5" height="4.2" fill="#8b6c30" />
<rect x="49.3" y="36.5" width="5.2" height="1.6" fill="#8b6c30" />
<rect x="49.3" y="36.5" width="1.5" height="4.2" fill="#8b6c30" />
<rect x="48" y="25.5" width="5" height="1.2" fill="#b7a36c" />
<path d="M64 30.5 H69.6 L66.8 34.8Z" fill="#6a6a6c"/>
<rect x="77.5" y="28.5" width="12" height="14" fill="#eef2fb" stroke="#5b76b4" stroke-width="1.1"/>
<rect x="79.5" y="36" width="2" height="1.2" fill="#4a66b0" />
<rect x="82.5" y="36" width="5.5" height="1.2" fill="#7f9ad8" />
<rect x="79.5" y="39" width="2" height="1.2" fill="#4a66b0" />
<rect x="82.5" y="39" width="5.5" height="1.2" fill="#7f9ad8" />
<path d="M91 23 H94 V32 L90.5 28Z" fill="#5aa65a"/>
<path d="M80.5 33.5 L82 29 L88.5 23.5 L92 26.5 L85.5 32.2Z" fill="#e2b63a" stroke="#b08a2c" stroke-width="0.7"/>
<path d="M80.5 33.5 L82 29 L84 31.5Z" fill="#d9cfc0"/>
<path d="M88.5 23.5 L92 26.5 L90.3 28 L87 25Z" fill="#c7902e"/>
<rect x="106" y="28.6" width="7.4" height="1.8" fill="#6a6a6c" />
<path d="M107 33 H112.6 L109.8 37.6Z" fill="#6a6a6c"/>
<path d="M72 61 H80 L84 64.5 V80 Q82 76.5 78.5 78 Q75 79.8 72 78 Z" fill="#f4f4fa" stroke="#8b8b93" stroke-width="1.1"/>
<path d="M80 61 V64.5 H84" fill="none" stroke="#6f6f78" stroke-width="1"/>
<path d="M83.9 65 V80 Q82.5 77 80.5 77.3" fill="none" stroke="#4c4c55" stroke-width="1.3"/>
<path d="M72 78 Q75 80 78.5 78.2" fill="none" stroke="#4c4c55" stroke-width="1.5"/>
<rect x="177.5" y="61" width="14.5" height="18" fill="#c9dcf6" />
<rect x="177.5" y="61" width="2" height="18" fill="#3c5a96" />
<rect x="177.5" y="61" width="14.5" height="1.6" fill="#5577c0" />
<rect x="185" y="61" width="1.2" height="18" fill="#5d7fc4" />
<rect x="190.8" y="61" width="1.2" height="18" fill="#44609e" />
<rect x="177.5" y="66.2" width="14.5" height="1.3" fill="#506fb2" />
<rect x="177.5" y="71.6" width="14.5" height="1.3" fill="#506fb2" />
<rect x="177.5" y="77.2" width="14.5" height="1.3" fill="#506fb2" />
<rect x="181" y="63" width="3" height="2.6" fill="#f6f9ff" stroke="#33497c" stroke-width="0.9"/>
<rect x="186.6" y="63.2" width="3.8" height="2.4" fill="#eaf3ff" />
<rect x="181" y="68.3" width="3" height="2.6" fill="#f6f9ff" stroke="#33497c" stroke-width="0.9"/>
<rect x="186.6" y="68.5" width="3.8" height="2.4" fill="#eaf3ff" />
<rect x="181" y="73.8" width="3" height="2.6" fill="#f6f9ff" stroke="#33497c" stroke-width="0.9"/>
<rect x="186.6" y="74.0" width="3.8" height="2.4" fill="#eaf3ff" />
<path d="M274 60 H283 L289.5 69.5 H280.5Z" fill="#c9c9cb" stroke="#161616" stroke-width="1.6" stroke-linejoin="round"/>
<path d="M280.5 69.5 H289.5 V76 L286 81 H274.5 V76.5Z" fill="#e2e2e4" stroke="#161616" stroke-width="1.6" stroke-linejoin="round"/>
<path d="M274.5 77 H285.5 L289 72" fill="none" stroke="#161616" stroke-width="1.4"/>
<rect x="275.5" y="78.3" width="9.5" height="2.5" fill="#202020" />
<rect x="280" y="73" width="5" height="3.6" fill="#8fa82a" />
<rect x="281.6" y="74" width="1.8" height="1.8" fill="#2b3a10" />
<rect x="279.5" y="70.6" width="6" height="1.2" fill="#444" />
<path d="M406 66 L408.5 61 H416.5 L415 66Z" fill="#f7f7fa" stroke="#8d9098" stroke-width="0.9"/>
<rect x="409.5" y="62.6" width="5" height="0.9" fill="#9a9da6" />
<rect x="409" y="64.3" width="5" height="0.9" fill="#9a9da6" />
<path d="M403 69 Q403 66.5 405.5 66.5 H415.5 Q418 66.5 418 69 V77.5 Q418 80 415.5 80 H405.5 Q403 80 403 77.5Z" fill="#cfd3da" stroke="#6e737d" stroke-width="1"/>
<rect x="404.5" y="72.5" width="12" height="5.5" fill="#f3f4f7" rx="1"/>
<rect x="411.5" y="74" width="4.5" height="3.5" fill="#2fa84a" />
<rect x="404" y="78.6" width="13" height="1.4" fill="#7b808a" />
<path d="M505 66 Q506 60.5 511 60.8 Q515 61.5 515.2 68" fill="none" stroke="#8a8a92" stroke-width="1.1"/>
<path d="M506 74 Q509 77.5 513 74" fill="none" stroke="#8a8a92" stroke-width="1.1"/>
<circle cx="509" cy="62.6" r="2.2" fill="#6c6cd0"/><path d="M505.5 69 Q505.5 65 509 65 Q512.5 65 512.5 69Z" fill="#7777dd"/>
<circle cx="504.6" cy="73.5" r="2" fill="#53672f"/><path d="M501.3 81 Q501.3 76 504.6 76 Q508 76 508 81Z" fill="#86c23c"/>
<circle cx="514" cy="73" r="2" fill="#7a6a2c"/><path d="M510.6 80.5 Q510.6 75.6 514 75.6 Q517.4 75.6 517.4 80.5Z" fill="#e3d23c"/>
<path d="M615.7 69.9 L615.7 72.1 L613.9 72.8 L613.5 74.5 L614.6 76.4 L613.6 78.2 L611.8 77.4 L610.7 78.5 L610.7 80.9 L609.1 81.6 L608.0 79.6 L606.6 79.6 L605.5 81.6 L603.9 80.9 L603.9 78.5 L602.8 77.4 L601.0 78.2 L600.0 76.4 L601.1 74.5 L600.7 72.8 L598.9 72.1 L598.9 69.9 L600.7 69.2 L601.1 67.5 L600.0 65.6 L601.0 63.8 L602.8 64.6 L603.9 63.5 L603.9 61.1 L605.5 60.4 L606.6 62.4 L608.0 62.4 L609.1 60.4 L610.7 61.1 L610.7 63.5 L611.8 64.6 L613.6 63.8 L614.6 65.6 L613.5 67.5 L613.9 69.2Z" fill="#8b8fca" stroke="#7478b4" stroke-width="0.6"/>
<ellipse cx="607.3" cy="71" rx="3.6" ry="4.8" fill="#fbfbff" stroke="#a9acdc" stroke-width="1"/>
<ellipse cx="1972" cy="70" rx="7" ry="9.6" fill="url(#gHelp)" stroke="#a9c4f2" stroke-width="1.6"/>
<text x="1968.6" y="75.5" font-family="Liberation Sans" font-size="16.72" font-weight="bold" fill="#bfe0ff" text-anchor="start" textLength="7.0" lengthAdjust="spacingAndGlyphs" >?</text>
<path d="M1984.8 67.2 H1990.4 L1987.6 71.6Z" fill="#77777a"/>
<ellipse cx="2006.5" cy="70" rx="7.2" ry="9.8" fill="url(#gExit)"/>
<path d="M2003.3 64.5 L2009.7 75.5 M2009.7 64.5 L2003.3 75.5" stroke="#fbe6c8" stroke-width="2.6" stroke-linecap="round"/>
<rect x="32.5" y="156.5" width="11.5" height="14" fill="#f6f6f6" stroke="#151515" stroke-width="1.5"/>
<rect x="35" y="162" width="2" height="1.3" fill="#151515" />
<rect x="38" y="162" width="4.5" height="1.3" fill="#151515" />
<rect x="35" y="165" width="2" height="1.3" fill="#151515" />
<rect x="38" y="165" width="4.5" height="1.3" fill="#151515" />
<rect x="35" y="168" width="2" height="1.3" fill="#151515" />
<rect x="38" y="168" width="4.5" height="1.3" fill="#151515" />
<path d="M46 151 L49.4 151 L49.4 160.5 L46.5 157Z" fill="#1b1b86"/>
<path d="M36.5 160.5 L38 156.3 L44 151.5 L47.6 155 L41.3 160Z" fill="#9a9a9a" stroke="#2a2a2a" stroke-width="1"/>
<path d="M36.5 160.5 L38 156.3 L40.6 158.7Z" fill="#efefef" stroke="#2a2a2a" stroke-width="0.6"/>
<rect x="123.5" y="152" width="10" height="10" fill="#fbfbfb" stroke="#151515" stroke-width="1.2"/>
<rect x="125" y="154.5" width="7" height="1.3" fill="#2a2a5a" />
<rect x="125" y="157.2" width="7" height="1.3" fill="#2a2a5a" />
<rect x="125" y="159.6" width="4" height="1.2" fill="#2a2a5a" />
<rect x="134.5" y="151" width="1.3" height="9" fill="#30308a" />
<rect x="137" y="152" width="1.2" height="8" fill="#8585c4" />
<rect x="139" y="153" width="1" height="7" fill="#a9a9d4" />
<path d="M132.2 150.5 L135 153.5 H129.5Z" fill="#c02020"/>
<rect x="123" y="164.3" width="1.6" height="1.3" fill="#30308a" />
<rect x="125.6" y="164.3" width="1.6" height="1.3" fill="#30308a" />
<rect x="123" y="167" width="1.6" height="1.3" fill="#30308a" />
<rect x="125.6" y="167" width="1.6" height="1.3" fill="#30308a" />
<rect x="123" y="169.6" width="1.6" height="1.3" fill="#30308a" />
<rect x="125.6" y="169.6" width="1.6" height="1.3" fill="#30308a" />
<rect x="129" y="163" width="10.5" height="9" fill="#fbfbfb" stroke="#151515" stroke-width="1.4"/>
<rect x="131.5" y="166.3" width="6" height="1.4" fill="#30308a" />
<rect x="131.5" y="168.8" width="6" height="1.4" fill="#30308a" />
<path d="M135.5 163 L139.5 159.5 V163Z" fill="#151515"/>
<path d="M184 158.5 L186.5 152.5 H194.5 L193 158.5Z" fill="#fbfbfb" stroke="#151515" stroke-width="1.3" stroke-linejoin="round"/>
<rect x="187.3" y="154.3" width="5.2" height="1" fill="#333" />
<rect x="186.7" y="156.2" width="5.2" height="1" fill="#333" />
<path d="M181 161.5 Q181 158.5 184 158.5 H194 Q197 158.5 197 161.5 V167 L194 171.5 H183.5 L181 168.5Z" fill="#e6e6e6" stroke="#151515" stroke-width="1.5" stroke-linejoin="round"/>
<path d="M181.5 164.5 H193.5 L196.5 161.5" fill="none" stroke="#151515" stroke-width="1.2"/>
<rect x="183" y="166.4" width="10" height="1.4" fill="#151515" />
<rect x="186.5" y="164.8" width="3" height="1.2" fill="#d8d82a" />
<path d="M183.5 169 H194" stroke="#151515" stroke-width="1.2"/>
<rect x="238.8" y="150.8" width="15.4" height="21.4" fill="#e4f1e2" stroke="#3c8c40" stroke-width="1.8"/>
<rect x="241" y="168" width="11" height="2.2" fill="#cfe6cc" />
<path d="M241.5 154 L251.5 168 M251.5 154 L241.5 168" stroke="#2f7f35" stroke-width="3.2"/>
<path d="M311.5 151.5 L323.5 168.5" stroke="#101010" stroke-width="2.4" stroke-linecap="round"/>
<path d="M323.5 152 L311.8 168" stroke="#101010" stroke-width="1.7" stroke-linecap="round"/>
<path d="M311.8 168 L316.5 161.5" stroke="#101010" stroke-width="3" stroke-linecap="round"/>
<rect x="380.7" y="157" width="15.6" height="15.3" fill="#fbfbfb" stroke="#151515" stroke-width="1.5"/>
<rect x="381.5" y="160.8" width="14" height="0.9" fill="#9a9aa0" />
<rect x="381.5" y="164.3" width="14" height="0.9" fill="#9a9aa0" />
<rect x="381.5" y="167.8" width="14" height="0.9" fill="#9a9aa0" />
<rect x="387.8" y="157" width="1.5" height="15.3" fill="#151515" />
<rect x="384.3" y="157.5" width="0.8" height="14" fill="#b5b5ba" />
<rect x="392.6" y="157.5" width="0.8" height="14" fill="#b5b5ba" />
<rect x="380" y="150.3" width="17" height="7" fill="#1f50da" stroke="#12308c" stroke-width="0.8"/>
<rect x="383.2" y="152.5" width="1.9" height="2.2" fill="#f2f6ff" />
<rect x="386.5" y="152.5" width="1.9" height="2.2" fill="#f2f6ff" />
<rect x="389.8" y="152.5" width="1.9" height="2.2" fill="#f2f6ff" />
<rect x="393.09999999999997" y="152.5" width="1.9" height="2.2" fill="#f2f6ff" />
<rect x="466.2" y="157" width="7.6" height="15.3" fill="#fbfbfb" stroke="#151515" stroke-width="1.5"/>
<rect x="467.0" y="160.8" width="6" height="0.9" fill="#9a9aa0" />
<rect x="467.0" y="164.3" width="6" height="0.9" fill="#9a9aa0" />
<rect x="467.0" y="167.8" width="6" height="0.9" fill="#9a9aa0" />
<rect x="469.8" y="157.5" width="0.8" height="14" fill="#b5b5ba" />
<rect x="465.5" y="150.3" width="17" height="7" fill="#1f50da" stroke="#12308c" stroke-width="0.8"/>
<rect x="472.0" y="152.5" width="1.9" height="2.2" fill="#f2f6ff" />
<rect x="475.3" y="152.5" width="1.9" height="2.2" fill="#f2f6ff" />
<rect x="478.6" y="152.5" width="1.9" height="2.2" fill="#f2f6ff" />
<path d="M569 151 H579.5 V168.5 H576.5 V154 L571.5 151.8" fill="#f1f1f1" stroke="#151515" stroke-width="1.4" stroke-linejoin="round"/>
<path d="M569 151 L576 154.5 V171.5 L569 166.5Z" fill="#8c8e2c" stroke="#151515" stroke-width="1.3" stroke-linejoin="round"/>
<path d="M576.5 172.3 Q580.5 172.5 580.3 168" fill="none" stroke="#2323b0" stroke-width="1.6"/>
<path d="M577.8 168.6 L580.4 165 L583 168.6Z" fill="#2323b0"/>
<rect x="29" y="231.5" width="14" height="19" fill="#fdfdfd" />
<path d="M28.5 232.2 H38 V237.5 H33.5 V240.5 L31 237.8 H28.5Z" fill="#9c1c34"/>
<path d="M40 230.5 L43.3 233.5 V236" fill="none" stroke="#444" stroke-width="0.9"/>
<path d="M39.5 238 Q39 243 33 249.5 M39.5 238 Q40.5 244.5 44 246.5 M34 246 Q38 244 44 244.5" fill="none" stroke="#c23a3a" stroke-width="1.7"/>
<rect x="29" y="254.5" width="14" height="19" fill="#fdfdfd" />
<path d="M28.5 255.2 H38 V260.5 H33.5 V263.5 L31 260.8 H28.5Z" fill="#9c1c34"/>
<path d="M40 253.5 L43.3 256.5 V259" fill="none" stroke="#444" stroke-width="0.9"/>
<path d="M39.5 261 Q39 266 33 272.5 M39.5 261 Q40.5 267.5 44 269.5 M34 269 Q38 267 44 267.5" fill="none" stroke="#c23a3a" stroke-width="1.7"/>
<text x="1031.5" y="132.5" font-family="Liberation Serif" font-size="27" fill="#f1fbff" stroke="#f1fbff" stroke-width="0.9" textLength="16" lengthAdjust="spacingAndGlyphs">Q</text>
<rect x="1031" y="147.5" width="4" height="21" fill="none" rx="2" stroke="#8f8f92" stroke-width="1"/>
<rect x="1037.5" y="147.5" width="4" height="21" fill="none" rx="2" stroke="#8f8f92" stroke-width="1"/>
<rect x="1092.5" y="147.5" width="4" height="21" fill="none" rx="2" stroke="#8f8f92" stroke-width="1"/>
<rect x="1194.5" y="147.5" width="4" height="21" fill="none" rx="2" stroke="#8f8f92" stroke-width="1"/>
<rect x="1248.5" y="147.5" width="4" height="21" fill="none" rx="2" stroke="#8f8f92" stroke-width="1"/>
<rect x="1326" y="147.5" width="4" height="21" fill="none" rx="2" stroke="#8f8f92" stroke-width="1"/>
<path d="M1048.5 155.6 H1055 V152.5 L1062 158.3 L1055 164.2 V161 H1048.5Z" fill="url(#gArr)"/>
<path d="M1085.5 155.6 H1079 V152.5 L1072 158.3 L1079 164.2 V161 H1085.5Z" fill="url(#gArr)" stroke="#b9c9f2" stroke-width="0.6"/>
<rect x="1101.5" y="155.5" width="11.5" height="12.5" fill="#f4f6fb" stroke="#c9d0e2" stroke-width="1"/>
<rect x="1103.5" y="160.5" width="2" height="1.2" fill="#4a66b0" />
<rect x="1106.3" y="160.5" width="5" height="1.2" fill="#7f9ad8" />
<rect x="1103.5" y="163.3" width="2" height="1.2" fill="#4a66b0" />
<rect x="1106.3" y="163.3" width="5" height="1.2" fill="#7f9ad8" />
<path d="M1115 148.5 H1117.8 V157 L1114.5 153.5Z" fill="#5aa65a"/>
<path d="M1104.5 158 L1106 154 L1112.5 148.8 L1116 152 L1109.5 157Z" fill="#e2b63a" stroke="#a88428" stroke-width="0.7"/>
<path d="M1134 151 Q1138 150 1138.5 156 L1141.5 167 H1134.5 L1135.5 157Z" fill="#7e66c2"/>
<path d="M1125.5 167 L1133 158.5 L1134.5 166.5Z" fill="#cfcfd4"/>
<path d="M1127.5 157.5 Q1129.5 151.5 1134.5 151" fill="none" stroke="#55555c" stroke-width="1.3"/>
<rect x="1149.0" y="148.5" width="2.6" height="3" fill="#4a70d8" />
<rect x="1152.4" y="148.5" width="2.6" height="3" fill="#4a70d8" />
<rect x="1155.8" y="148.5" width="2.6" height="3" fill="#4a70d8" />
<rect x="1159.2" y="148.5" width="2.6" height="3" fill="#4a70d8" />
<rect x="1149.0" y="152.3" width="2.6" height="3" fill="#4a70d8" />
<rect x="1152.4" y="152.3" width="2.6" height="3" fill="#4a70d8" />
<rect x="1155.8" y="152.3" width="2.6" height="3" fill="#4a70d8" />
<rect x="1159.2" y="152.3" width="2.6" height="3" fill="#4a70d8" />
<rect x="1149.0" y="156.1" width="2.6" height="3" fill="#4a70d8" />
<rect x="1152.4" y="156.1" width="2.6" height="3" fill="#4a70d8" />
<rect x="1155.8" y="156.1" width="2.6" height="3" fill="#4a70d8" />
<rect x="1159.2" y="156.1" width="2.6" height="3" fill="#4a70d8" />
<circle cx="1157.5" cy="160" r="3.4" fill="#e9e9ee" stroke="#b9b9c2" stroke-width="1"/>
<path d="M1160 163 L1165.5 168.5" stroke="#d89a3a" stroke-width="2.4" stroke-linecap="round"/>
<path d="M1175 149 H1182.5 L1186 152.5 V168.5 H1175Z" fill="#f7f8fc" stroke="#c9cfdf" stroke-width="0.8"/>
<rect x="1177" y="154.5" width="7" height="1.2" fill="#8a93ad" />
<rect x="1177" y="157.5" width="7" height="1.2" fill="#8a93ad" />
<rect x="1177" y="160.5" width="7" height="1.2" fill="#8a93ad" />
<rect x="1177" y="163.5" width="7" height="1.2" fill="#8a93ad" />
<rect x="1204.5" y="152.5" width="13.5" height="12" fill="#f4f4f7" stroke="#d3d3da" stroke-width="0.8"/>
<rect x="1206.5" y="157.5" width="6" height="1.1" fill="#9093a2" />
<rect x="1206.5" y="160" width="6" height="1.1" fill="#9093a2" />
<rect x="1214" y="154.3" width="2.3" height="2.6" fill="#b03434" />
<path d="M1231 156 L1234 149.5 H1242 L1239.5 156Z" fill="#f7f7fa" stroke="#c9c9d0" stroke-width="0.7"/>
<rect x="1234.5" y="151.5" width="5" height="0.9" fill="#9a9da6" />
<rect x="1233.8" y="153.5" width="5" height="0.9" fill="#9a9da6" />
<path d="M1227.5 159 Q1227.5 156 1230 156 H1240 Q1242.5 156 1242.5 159 V165 Q1242.5 167.5 1240 167.5 H1230 Q1227.5 167.5 1227.5 165Z" fill="#d7dae0" stroke="#a9adb6" stroke-width="0.8"/>
<rect x="1229" y="161.5" width="12" height="4.5" fill="#f3f4f7" />
<rect x="1237" y="162.5" width="4" height="3.2" fill="#2fa84a" />
<path d="M1260 149.5 H1266 L1270.5 154 V169 H1260Z" fill="#fbf0dd"/>
<path d="M1261 158 L1270 170 M1270 158 L1261 170" stroke="#e2563a" stroke-width="2.2"/>
<path d="M1283 150 L1295 167.5 M1295 150 L1283 167.5" stroke="#e04632" stroke-width="3.6" stroke-linecap="round"/>
<rect x="1304" y="147.3" width="17" height="23" fill="#fbfbfb" />
<path d="M1305.5 150 H1315 V154.8 H1311 V157 L1309 154.8 H1305.5Z" fill="#c6282e"/>
<path d="M1313.5 155 Q1313 161 1308 168 M1313.5 155 Q1314.5 162.5 1318 165 M1309 165.5 Q1313 163.6 1318 164.2" fill="none" stroke="#d58a8e" stroke-width="1.3"/>
<rect x="1309" y="169" width="8" height="1.4" fill="#333" />
<rect x="1335" y="155" width="8.4" height="1.8" fill="#0c0c0c" />
<path d="M1335.6 159.6 H1342.8 L1339.2 165Z" fill="#0c0c0c"/>
<ellipse cx="2006" cy="193.5" rx="6.4" ry="8.2" fill="url(#gHelp)" stroke="#b9d0f6" stroke-width="1.5"/>
<text x="2003" y="198.3" font-family="Liberation Sans" font-size="14.53" font-weight="bold" fill="#cfe6ff" text-anchor="start" textLength="6" lengthAdjust="spacingAndGlyphs" >?</text>
<rect x="1991.5" y="114" width="32.5" height="24.5" fill="url(#gClose)" rx="3" stroke="#7c3434" stroke-width="1.3"/>
<path d="M2003.5 121.5 L2012 131.5 M2012 121.5 L2003.5 131.5" stroke="#5a2a2a" stroke-width="4.4" stroke-linecap="round" opacity="0.55"/>
<path d="M2003.5 121.5 L2012 131.5 M2012 121.5 L2003.5 131.5" stroke="#ffffff" stroke-width="2.8" stroke-linecap="round"/>
<path d="M2004.5 231.5 L2008.5 226.2 L2012.5 231.5Z" fill="#4d4d50"/>
<rect x="2001" y="241.5" width="15" height="20.5" fill="url(#gThumb)" rx="1.5" stroke="#b9b9bf" stroke-width="1"/>
<path d="M2005.3 1391.6 L2009 1396.8 L2012.8 1391.6Z" fill="#3d3d40"/>
<rect x="2015" y="1438.4" width="2.2" height="2.2" fill="#f2f2f2" />
<rect x="2015" y="1432" width="2.2" height="2.2" fill="#f2f2f2" />
<rect x="2015" y="1426.5" width="2.2" height="2.2" fill="#f2f2f2" />
<rect x="2010.6" y="1438.4" width="2.2" height="2.2" fill="#f2f2f2" />
<rect x="2010.6" y="1432" width="2.2" height="2.2" fill="#f2f2f2" />
<rect x="2006.2" y="1438.4" width="2.2" height="2.2" fill="#f2f2f2" />
<path d="M2031.5 1489 L2035 1485.5" stroke="#a9a9a9" stroke-width="1.2"/>
<path d="M2028.0 1489 L2035 1482.0" stroke="#a9a9a9" stroke-width="1.2"/>
<path d="M2024.5 1489 L2035 1478.5" stroke="#a9a9a9" stroke-width="1.2"/>
<rect x="1020.8" y="104" width="1.2" height="1351" fill="#e6eef8" />
<path d="M1014.5 100.7 Q1018.6 101 1019.9 107.5 Q1021.2 101 1025.5 100.7 Z" fill="#f6f6f6"/>
<rect x="11" y="100.9" width="1005" height="1.7" fill="#e2e9f0" opacity="0.85"/>
<rect x="9.5" y="104" width="1.4" height="1351" fill="#e9eff6" opacity="0.9"/>
<rect x="1026" y="100.9" width="1006" height="1.5" fill="#d3e0f0" opacity="0.8"/>
<path d="M8 100.5 H13.5 Q9.8 101.2 9.3 106 H8Z" fill="#f6f6f6"/>
<path d="M8.6 106.5 Q9 101.6 13.8 100.9" fill="none" stroke="#55595d" stroke-width="1.3"/>
</svg>
</body></html>
